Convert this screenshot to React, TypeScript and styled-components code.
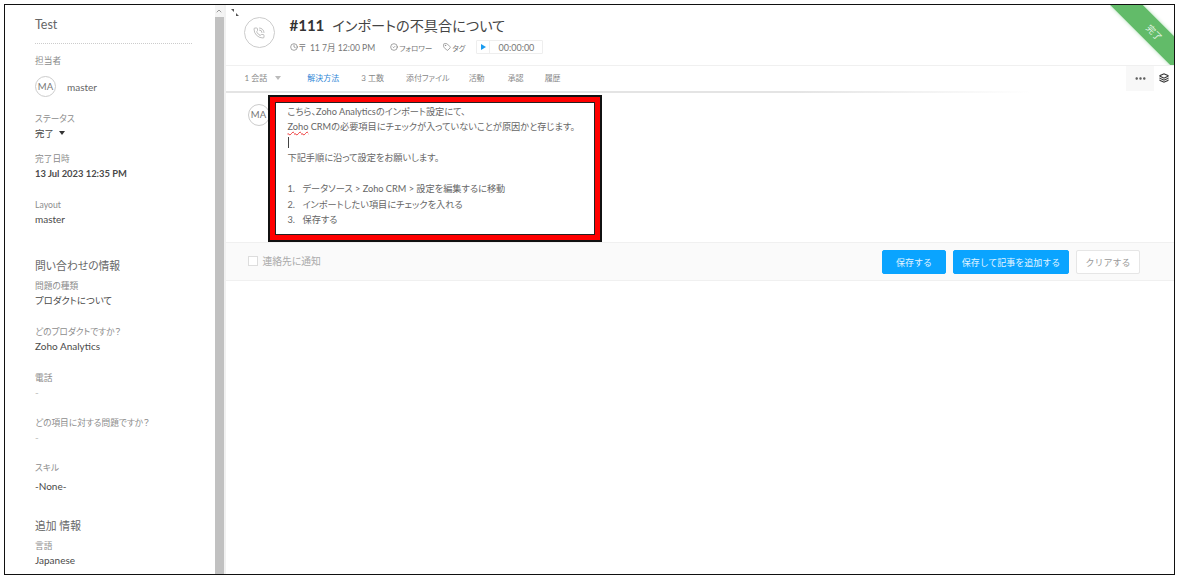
import React from "react";
import styled, { createGlobalStyle } from "styled-components";
import { Clock, CheckCircle2, Tag, PhoneCall, Layers, ChevronUp, MoreHorizontal } from "lucide-react";

const FONT = `Lato, "Noto Sans CJK JP", "Noto Sans", sans-serif`;

const Global = createGlobalStyle`
  html, body { margin: 0; padding: 0; background: #fff; font-family: ${FONT}; font-feature-settings: "palt"; }
  * { box-sizing: border-box; }
`;

const Frame = styled.div`
  position: relative;
  display: flex;
  width: 1171px;
  height: 571px;
  margin: 4px 0 0 4px;
  border: 1.5px solid #111;
  overflow: hidden;
  background: #fff;
`;

const Sidebar = styled.aside`
  flex: 0 0 209.5px;
  padding: 10px 22px 0 30px;
  overflow: hidden;
`;
const SideTitle = styled.div`
  font-size: 12.5px;
  line-height: 20px;
  color: #666;
`;
const Dotted = styled.div`
  margin-top: 8px;
  width: 157px;
  border-top: 1px dotted #ccc;
`;
const Field = styled.div<{ $top: number }>`
  margin-top: ${(p) => p.$top}px;
`;
const Label = styled.div`
  font-size: 8.7px;
  line-height: 14px;
  color: #8d8d8d;
  white-space: nowrap;
`;
const Value = styled.div<{ $gap?: number; $bold?: boolean; $faint?: boolean; $cjk?: boolean }>`
  margin-top: ${(p) => p.$gap ?? 0}px;
  font-size: ${(p) => (p.$bold ? 9.4 : p.$cjk ? 9.4 : 10)}px;
  line-height: 15px;
  color: ${(p) => (p.$faint ? "#bbb" : "#4a4a4a")};
  font-weight: ${(p) => (p.$bold ? 700 : 400)};
  white-space: nowrap;
`;
const Section = styled.div<{ $top: number }>`
  margin-top: ${(p) => p.$top}px;
  font-size: 10.8px;
  line-height: 20px;
  color: #666;
`;
const Owner = styled.div`
  display: flex;
  align-items: center;
  gap: 11px;
  margin-top: 8px;
  font-size: 10px;
  color: #666;
`;
const Avatar = styled.div<{ $size: number }>`
  flex: none;
  width: ${(p) => p.$size}px;
  height: ${(p) => p.$size}px;
  border: 1px solid #ccc;
  border-radius: 50%;
  background: #fff;
  display: flex;
  align-items: center;
  justify-content: center;
  font-size: 9.5px;
  color: #777;
`;
const Caret = styled.span`
  display: inline-block;
  margin-left: 5px;
  vertical-align: 2px;
  border-left: 3.5px solid transparent;
  border-right: 3.5px solid transparent;
  border-top: 4px solid #333;
`;

const Scrollbar = styled.div`
  flex: 0 0 11px;
  display: flex;
  flex-direction: column;
  border-right: 2px solid #f1f1f1;
`;
const ScrollUp = styled.div`
  height: 12px;
  background: #f4f4f4;
  color: #999;
  display: flex;
  align-items: center;
  justify-content: center;
`;
const ScrollThumb = styled.div`
  flex: 1;
  background: #c1c1c1;
`;

const Main = styled.main`
  position: relative;
  flex: 1;
  min-width: 0;
  display: flex;
  flex-direction: column;
`;
const Collapse = styled.svg`
  position: absolute;
  left: 5px;
  top: 4px;
`;
const RibbonClip = styled.div`
  position: absolute;
  top: 0;
  right: 0;
  width: 64px;
  height: 60px;
  overflow: hidden;
`;
const Ribbon = styled.div`
  position: absolute;
  left: -20px;
  top: 12px;
  width: 120px;
  height: 23px;
  padding-left: 12px;
  background: #62bb69;
  box-shadow: 0 0 4px rgba(98, 187, 105, 0.5);
  color: #eaf7eb;
  font-size: 9px;
  line-height: 23px;
  text-align: center;
  transform: rotate(45deg);
`;

const Header = styled.header`
  flex: 0 0 60.5px;
  display: flex;
  align-items: flex-start;
  padding: 12px 0 0 18px;
  gap: 15px;
  border-bottom: 1px solid #f0f0f0;
`;
const CallIcon = styled.div`
  flex: none;
  width: 31px;
  height: 31px;
  border: 1px solid #ccc;
  border-radius: 50%;
  display: flex;
  align-items: center;
  justify-content: center;
  color: #aaa;
`;
const HeadText = styled.div`
  display: flex;
  flex-direction: column;
  margin-top: -3px;
`;
const Title = styled.h1`
  margin: 0;
  font-size: 14.2px;
  line-height: 22px;
  font-weight: 400;
  color: #444;
  white-space: nowrap;
  b {
    font-size: 15px;
    font-weight: 700;
    color: #333;
    margin-right: 8px;
  }
`;
const Meta = styled.div`
  display: flex;
  align-items: center;
  margin-top: 3px;
  height: 14px;
  white-space: nowrap;
`;
const MetaItem = styled.span<{ $ml?: number; $small?: boolean }>`
  display: inline-flex;
  align-items: center;
  gap: 1px;
  margin-left: ${(p) => p.$ml ?? 0}px;
  font-size: ${(p) => (p.$small ? 7.4 : 8.6)}px;
  color: #777;
`;
const Timer = styled.div`
  display: flex;
  align-items: center;
  width: 67px;
  height: 14px;
  margin-left: 11px;
  border: 1px solid #eee;
  border-radius: 1px;
`;
const Play = styled.span`
  flex: 0 0 13px;
  height: 100%;
  display: flex;
  align-items: center;
  justify-content: center;
  border-right: 1px solid #eee;
  &::before {
    content: "";
    border-left: 5px solid #1a9cf0;
    border-top: 3.5px solid transparent;
    border-bottom: 3.5px solid transparent;
  }
`;
const Time = styled.span`
  flex: 1;
  text-align: center;
  font-size: 9px;
  color: #777;
`;

const Tabs = styled.nav`
  flex: 0 0 25px;
  display: flex;
  align-items: center;
  padding-left: 19px;
  position: relative;
`;
const TabShadow = styled.div`
  position: absolute;
  left: 0;
  right: 0;
  bottom: -2px;
  height: 2px;
  background: linear-gradient(90deg, #e4e4e4 0%, #e4e4e4 60%, #fff 85%);
`;
const Tab = styled.span<{ $active?: boolean; $ml: number }>`
  margin-left: ${(p) => p.$ml}px;
  font-size: 8px;
  line-height: 25px;
  color: ${(p) => (p.$active ? "#2f86d6" : "#888")};
  white-space: nowrap;
`;
const TabCaret = styled.span`
  display: inline-block;
  margin-left: 8px;
  vertical-align: 1px;
  border-left: 3.5px solid transparent;
  border-right: 3.5px solid transparent;
  border-top: 4px solid #bbb;
`;
const TabTools = styled.div`
  margin-left: auto;
  display: flex;
  align-items: center;
  height: 100%;
`;
const More = styled.div`
  width: 28px;
  height: 100%;
  background: #f8f8f8;
  display: flex;
  align-items: center;
  justify-content: center;
  color: #555;
`;
const LayersBox = styled.div`
  width: 20px;
  display: flex;
  justify-content: center;
  color: #333;
`;

const Body = styled.section`
  flex: 0 0 149px;
  display: flex;
  align-items: flex-start;
  padding-left: 22px;
`;
const ReplyAvatar = styled(Avatar)`
  margin-top: 13px;
`;
const RedBox = styled.div`
  position: relative;
  margin: 4px 0 0 -2px;
  width: 334px;
  height: 147px;
  border: 2px solid #111;
  background: #f00;
  padding: 5px;
  z-index: 1;
`;
const Editor = styled.div`
  width: 100%;
  height: 100%;
  border: 1.5px solid #222;
  background: #fff;
  padding: 1px 0 0 12px;
  font-size: 9.2px;
  line-height: 15.5px;
  color: #666;
  white-space: nowrap;
`;
const Line = styled.div`
  height: 15.5px;
`;
const Step = styled.div`
  display: flex;
  height: 15.5px;
`;
const StepNo = styled.span`
  flex: 0 0 15px;
`;
const Spell = styled.span`
  text-decoration: underline wavy #e33;
  text-decoration-thickness: 1px;
`;
const Cursor = styled.span`
  display: inline-block;
  width: 1px;
  height: 11px;
  margin-top: 2px;
  background: #444;
`;

const Footer = styled.div`
  flex: 0 0 39px;
  display: flex;
  align-items: center;
  padding: 0 34px 0 22px;
  background: #fafafa;
  border-top: 1px solid #f0f0f0;
  border-bottom: 1px solid #f0f0f0;
`;
const Check = styled.span`
  width: 10px;
  height: 10px;
  border: 1px solid #ddd;
  background: #fff;
  margin-right: 5px;
`;
const Notify = styled.span`
  font-size: 9.8px;
  color: #aaa;
`;
const Buttons = styled.div`
  margin: 2px 0 0 auto;
  display: flex;
  gap: 7px;
`;
const Btn = styled.button<{ $w: number; $primary?: boolean }>`
  width: ${(p) => p.$w}px;
  height: 24px;
  padding: 0;
  border-radius: 2px;
  border: 1px solid ${(p) => (p.$primary ? "#0aa4ff" : "#e6e6e6")};
  background: ${(p) => (p.$primary ? "#0aa4ff" : "#fff")};
  color: ${(p) => (p.$primary ? "#e4f4ff" : "#999")};
  font-family: ${FONT};
  font-size: 9px;
`;

export default function App() {
  return (
    <>
      <Global />
      <Frame>
        <Sidebar>
          <SideTitle>Test</SideTitle>
          <Dotted />
          <Field $top={10}>
            <Label>担当者</Label>
            <Owner>
              <Avatar $size={21}>MA</Avatar>
              master
            </Owner>
          </Field>
          <Field $top={15}>
            <Label>ステータス</Label>
            <Value $cjk>
              完了
              <Caret />
            </Value>
          </Field>
          <Field $top={10.5}>
            <Label>完了日時</Label>
            <Value $bold>13 Jul 2023 12:35 PM</Value>
          </Field>
          <Field $top={17}>
            <Label>Layout</Label>
            <Value>master</Value>
          </Field>
          <Section $top={29}>問い合わせの情報</Section>
          <Field $top={3}>
            <Label>問題の種類</Label>
            <Value $cjk>プロダクトについて</Value>
          </Field>
          <Field $top={17}>
            <Label>どのプロダクトですか？</Label>
            <Value>Zoho Analytics</Value>
          </Field>
          <Field $top={17}>
            <Label>電話</Label>
            <Value $faint>-</Value>
          </Field>
          <Field $top={16}>
            <Label>どの項目に対する問題ですか？</Label>
            <Value $faint>-</Value>
          </Field>
          <Field $top={16}>
            <Label>スキル</Label>
            <Value $gap={4.5}>-None-</Value>
          </Field>
          <Section $top={21.5}>追加 情報</Section>
          <Field $top={3}>
            <Label>言語</Label>
            <Value>Japanese</Value>
          </Field>
        </Sidebar>

        <Scrollbar>
          <ScrollUp>
            <ChevronUp size={8} strokeWidth={3} />
          </ScrollUp>
          <ScrollThumb />
        </Scrollbar>

        <Main>
          <Collapse width="8" height="7" viewBox="0 0 8 7">
            <path d="M0 0 L3 0 L3 3 Z M8 7 L5 7 L5 4 Z" fill="#555" />
          </Collapse>
          <RibbonClip>
            <Ribbon>完了</Ribbon>
          </RibbonClip>
          <Header>
            <CallIcon>
              <PhoneCall size={12} strokeWidth={1.5} />
            </CallIcon>
            <HeadText>
              <Title>
                <b>#111</b>インポートの不具合について
              </Title>
              <Meta>
                <MetaItem>
                  <Clock size={8} />〒
                </MetaItem>
                <MetaItem $ml={4}>11 7月 12:00 PM</MetaItem>
                <MetaItem $ml={15} $small>
                  <CheckCircle2 size={8} />
                  フォロワー
                </MetaItem>
                <MetaItem $ml={11} $small>
                  <Tag size={8} />
                  タグ
                </MetaItem>
                <Timer>
                  <Play />
                  <Time>00:00:00</Time>
                </Timer>
              </Meta>
            </HeadText>
          </Header>

          <Tabs>
            <Tab $ml={0}>
              1 会話
              <TabCaret />
            </Tab>
            <Tab $ml={26} $active>
              解決方法
            </Tab>
            <Tab $ml={22}>3 工数</Tab>
            <Tab $ml={22}>添付ファイル</Tab>
            <Tab $ml={19}>活動</Tab>
            <Tab $ml={23}>承認</Tab>
            <Tab $ml={21}>履歴</Tab>
            <TabTools>
              <More>
                <MoreHorizontal size={13} strokeWidth={2.5} />
              </More>
              <LayersBox>
                <Layers size={10} strokeWidth={2.5} />
              </LayersBox>
            </TabTools>
            <TabShadow />
          </Tabs>

          <Body>
            <ReplyAvatar $size={22}>MA</ReplyAvatar>
            <RedBox>
              <Editor>
                <Line>こちら、Zoho Analyticsのインポート設定にて、</Line>
                <Line>
                  <Spell>Zoho</Spell> CRMの必要項目にチェックが入っていないことが原因かと存じます。
                </Line>
                <Line>
                  <Cursor />
                </Line>
                <Line>下記手順に沿って設定をお願いします。</Line>
                <Line />
                <Step>
                  <StepNo>1.</StepNo>データソース &gt; Zoho CRM &gt; 設定を編集するに移動
                </Step>
                <Step>
                  <StepNo>2.</StepNo>インポートしたい項目にチェックを入れる
                </Step>
                <Step>
                  <StepNo>3.</StepNo>保存する
                </Step>
              </Editor>
            </RedBox>
          </Body>

          <Footer>
            <Check />
            <Notify>連絡先に通知</Notify>
            <Buttons>
              <Btn $w={64} $primary>
                保存する
              </Btn>
              <Btn $w={116} $primary>
                保存して記事を追加する
              </Btn>
              <Btn $w={64}>クリアする</Btn>
            </Buttons>
          </Footer>
        </Main>
      </Frame>
    </>
  );
}
